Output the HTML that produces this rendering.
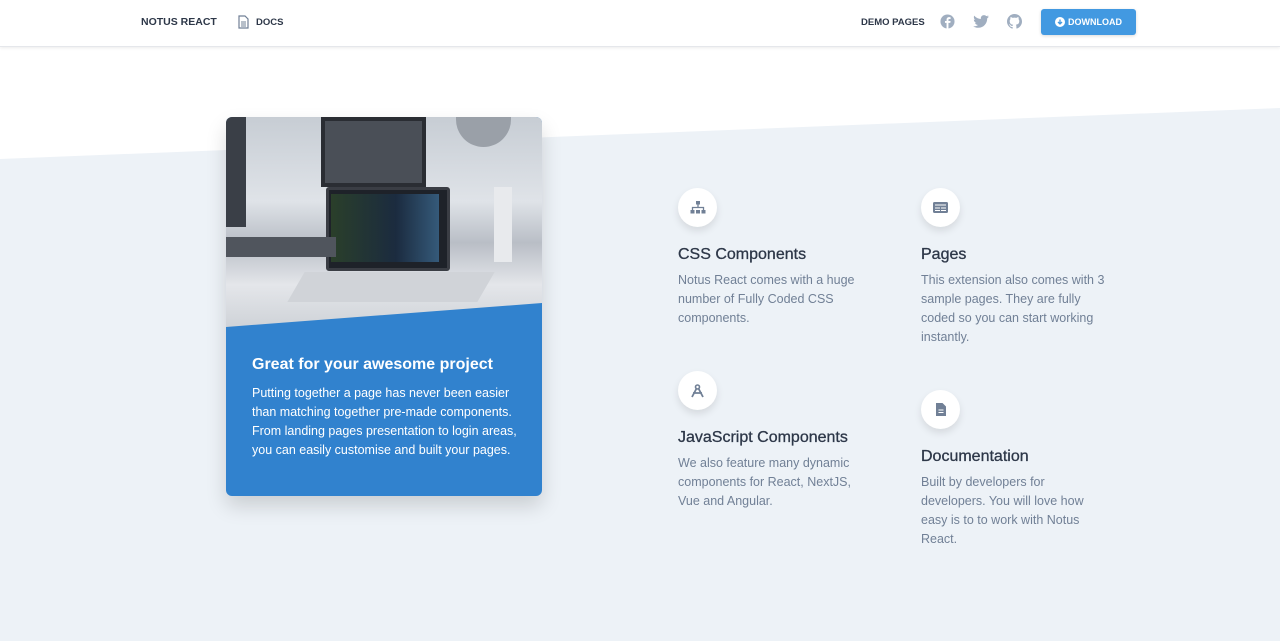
<!DOCTYPE html>
<html><head><meta charset="utf-8"><style>
*{margin:0;padding:0;box-sizing:border-box}
body{width:1280px;height:641px;overflow:hidden;background:#fff;font-family:"Liberation Sans",sans-serif;position:relative}
.nav{position:absolute;top:0;left:0;width:1280px;height:47px;background:#fff;border-bottom:1px solid #e5e7eb;box-shadow:0 1px 3px rgba(0,0,0,.08);z-index:5}
.nav .t{position:absolute;font-size:10.5px;font-weight:bold;color:#2d3748;top:16px}
.bg{position:absolute;left:0;top:0;width:1280px;height:641px;background:#edf2f7;clip-path:polygon(0 159px,1280px 108px,1280px 641px,0 641px)}
.card{position:absolute;left:226px;top:117px;width:316px;height:379px;border-radius:6px;overflow:hidden;background:#3182ce;box-shadow:0 10px 20px rgba(0,0,0,.15)}
.photo{position:absolute;left:0;top:0;width:316px;height:210px;background:linear-gradient(180deg,#c7cdd4 0%,#dfe3e8 40%,#b9bec6 60%,#e4e6ea 80%,#cfd3d8 100%);clip-path:polygon(0 0,316px 0,316px 186px,0 210px)}
.card h4{position:absolute;left:26px;top:239px;color:#fff;font-size:16px;font-weight:bold}
.card p{position:absolute;left:26px;top:267px;width:270px;color:#fff;font-size:12.5px;line-height:19px}
.f{position:absolute;width:200px}
.ic{width:39px;height:39px;border-radius:50%;background:#fff;box-shadow:0 4px 8px rgba(0,0,0,.1);display:flex;align-items:center;justify-content:center}
.f h6{font-size:16px;color:#2d3748;font-weight:normal;margin-top:19px;-webkit-text-stroke:.3px #2d3748}
.f p{font-size:12.5px;color:#718096;line-height:19px;margin-top:7px;width:188px}
</style></head><body>
<div class="bg"></div>
<div class="nav">
<span class="t" style="left:141px">NOTUS REACT</span>
<svg style="position:absolute;left:238px;top:15px" width="11" height="14" viewBox="0 0 11 14"><path d="M1 1h6l3 3v9H1z" fill="none" stroke="#718096" stroke-width="1.2"/><path d="M3 7h5M3 9h5M3 11h5" stroke="#718096"/></svg>
<span class="t" style="left:256px;font-size:9.5px;top:17px">DOCS</span>
<span class="t" style="left:861px;font-size:9.5px;top:17px">DEMO PAGES</span>
<svg style="position:absolute;left:940px;top:14px" width="15" height="15" viewBox="0 0 16 16"><circle cx="8" cy="8" r="7.5" fill="#a0aec0"/><path d="M9 16V9.5h2l.3-2H9V6.3c0-.6.2-1 1-1h1.3V3.5C11 3.4 10.4 3.3 9.7 3.3 8.2 3.3 7 4.2 7 6v1.5H5.3v2H7V16z" fill="#fff"/></svg>
<svg style="position:absolute;left:973px;top:15px" width="16" height="13" viewBox="0 0 24 20"><path d="M24 2.4c-.9.4-1.8.6-2.8.8 1-.6 1.8-1.6 2.2-2.7-1 .6-2 1-3.1 1.2C19.3.7 18 .1 16.600.1c-2.7 0-4.9 2.200-4.9 4.9 0 .4 0 .8.1 1.1C7.7 5.9 4.1 4 1.7 1 1.2 1.7 1 2.6 1 3.5c0 1.7.9 3.2 2.2 4.1-.8 0-1.6-.2-2.2-.6v.1c0 2.4 1.7 4.4 3.9 4.8-.4.1-.8.2-1.3.2-.3 0-.6 0-.9-.1.6 2 2.4 3.4 4.6 3.4-1.7 1.3-3.8 2.1-6.1 2.1H0c2.2 1.4 4.8 2.2 7.5 2.2 9.1 0 14-7.5 14-14v-.6c1-.7 1.8-1.6 2.5-2.5z" fill="#a0aec0"/></svg>
<svg style="position:absolute;left:1007px;top:14px" width="15" height="15" viewBox="0 0 16 16"><path d="M8 0C3.6 0 0 3.6 0 8c0 3.5 2.3 6.5 5.5 7.6.4.1.5-.2.5-.4v-1.4c-2.2.5-2.7-1-2.7-1-.4-.9-.9-1.2-.9-1.2-.7-.5.1-.5.1-.5.8.1 1.2.8 1.2.8.7 1.2 1.9.9 2.3.7.1-.5.3-.9.5-1.100-1.8-.2-3.600-.9-3.600-4 0-.9.3-1.600.8-2.100-.1-.2-.4-1 .1-2.100 0 0 .7-.2 2.200.8.600-.2 1.300-.3 2-.3s1.400.1 2 .3c1.500-1 2.200-.8 2.200-.8.400 1.100.2 1.900.1 2.100.5.600.8 1.300.8 2.100 0 3.100-1.900 3.700-3.600 3.900.3.3.5.8.5 1.500v2.200c0 .2.1.5.6.4C13.700 14.500 16 11.500 16 8c0-4.400-3.600-8-8-8z" fill="#a0aec0"/></svg>
<div style="position:absolute;left:1041px;top:9px;width:95px;height:26px;background:#4299e1;border-radius:3px;box-shadow:0 1px 3px rgba(0,0,0,.15);color:#fff;font-size:9px;font-weight:bold;display:flex;align-items:center;justify-content:center;gap:3px"><svg width="10" height="10" viewBox="0 0 10 10"><circle cx="5" cy="5" r="5" fill="#fff"/><path d="M5 2.5v4M3 5l2 2 2-2" stroke="#4299e1" stroke-width="1.3" fill="none"/></svg>DOWNLOAD</div>
</div>
<div class="card">
<div class="photo">
<div style="position:absolute;left:0;top:0;width:20px;height:110px;background:#3a3f47"></div>
<div style="position:absolute;left:95px;top:0;width:105px;height:70px;background:#4a4f57;border:4px solid #2a2d33"></div>
<div style="position:absolute;left:100px;top:70px;width:124px;height:84px;background:#1e2229;border:3px solid #3a3d44;border-radius:3px"></div>
<div style="position:absolute;left:105px;top:77px;width:108px;height:68px;background:linear-gradient(90deg,#2a3f2a,#1b2b3f 60%,#355a7a)"></div>
<div style="position:absolute;left:70px;top:155px;width:190px;height:30px;background:#d0d3d8;transform:skewX(-30deg)"></div>
<div style="position:absolute;left:0;top:120px;width:110px;height:20px;background:#50555d"></div>
<div style="position:absolute;left:230px;top:0;width:55px;height:30px;background:#9aa0a8;border-radius:0 0 30px 30px"></div>
<div style="position:absolute;left:268px;top:70px;width:18px;height:75px;background:#e8eaed"></div>
</div>
<h4>Great for your awesome project</h4>
<p>Putting together a page has never been easier than matching together pre-made components. From landing pages presentation to login areas, you can easily customise and built your pages.</p>
</div>
<div class="f" style="left:678px;top:188px"><div class="ic"><svg width="16" height="13" viewBox="0 0 16 13"><rect x="6" y="0" width="4" height="3.5" fill="#718096"/><path d="M8 3.5v3M2.5 9V6.5h11V9" stroke="#718096" fill="none" stroke-width="1.3"/><rect x="0.5" y="9" width="4" height="3.5" fill="#718096"/><rect x="6" y="9" width="4" height="3.5" fill="#718096"/><rect x="11.5" y="9" width="4" height="3.5" fill="#718096"/></svg></div><h6>CSS Components</h6><p>Notus React comes with a huge number of Fully Coded CSS components.</p></div>
<div class="f" style="left:921px;top:188px"><div class="ic"><svg width="15" height="11" viewBox="0 0 15 11"><rect width="15" height="11" rx="1.5" fill="#718096"/><path d="M2 3h11M2 6h5M8 6h5M2 8.5h5M8 8.5h5" stroke="#fff" stroke-width="1"/></svg></div><h6>Pages</h6><p>This extension also comes with 3 sample pages. They are fully coded so you can start working instantly.</p></div>
<div class="f" style="left:678px;top:371px"><div class="ic"><svg width="15" height="14" viewBox="0 0 15 14"><circle cx="7.5" cy="3" r="2" fill="none" stroke="#718096" stroke-width="1.6"/><path d="M6.5 4.5L2 13M8.5 4.5L13 13M3 9h9" stroke="#718096" stroke-width="1.8" fill="none"/></svg></div><h6>JavaScript Components</h6><p>We also feature many dynamic components for React, NextJS, Vue and Angular.</p></div>
<div class="f" style="left:921px;top:390px"><div class="ic"><svg width="10" height="13" viewBox="0 0 10 13"><path d="M0 0h6.5L10 3.5V13H0z" fill="#718096"/><path d="M2.5 7h5M2.5 9.5h5" stroke="#fff"/></svg></div><h6>Documentation</h6><p>Built by developers for developers. You will love how easy is to to work with Notus React.</p></div>
</body></html>
